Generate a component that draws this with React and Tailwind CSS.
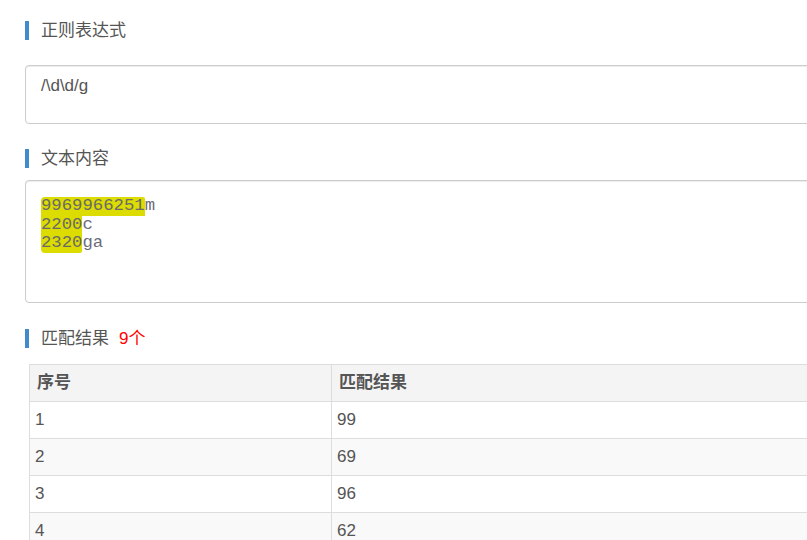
const matches = ["99", "69", "96", "62", "51", "22", "00", "23", "20"];

const lines = [
  { hit: "9969966251", rest: "m", first: true },
  { hit: "2200", rest: "c" },
  { hit: "2320", rest: "ga", last: true },
];

const SectionTitle = ({ children, className = "" }) => (
  <div
    className={`flex h-[19px] items-center border-l-4 border-[#428bca] pl-3 text-[17px] text-[#555] ${className}`}
  >
    {children}
  </div>
);

const App = () => {
  return (
    <div
      className="h-[540px] w-[807px] overflow-hidden bg-white text-[#555]"
      style={{ fontFamily: '"Liberation Sans", "Noto Sans CJK SC", sans-serif' }}
    >
      <div className="w-[1100px] pl-[25px] pt-[21px]">
        <SectionTitle>正则表达式</SectionTitle>

        <div className="mt-[25px] h-[59px] w-[1000px] rounded-[4px] border border-[#ccc] px-[15px] pt-[8px] text-[17px] leading-[24px] shadow-[inset_0_1px_1px_rgba(0,0,0,0.075)]">
          /\d\d/g
        </div>

        <SectionTitle className="mt-[25px]">文本内容</SectionTitle>

        <div
          className="mt-[12px] h-[123px] w-[1000px] rounded-[4px] border border-[#ccc] px-[15px] pt-[16px] text-[17.3px] font-light text-[#6a6a6a] shadow-[inset_0_1px_1px_rgba(0,0,0,0.075)]"
          style={{ fontFamily: '"Liberation Mono", monospace' }}
        >
          {lines.map((l) => (
            <div key={l.hit} className="flex h-[18.5px] leading-[18.5px]">
              <span
                className={`bg-[#dcdc00] ${l.first ? "rounded-tl-[4px] rounded-tr-[2px]" : ""} ${
                  l.last ? "rounded-bl-[4px] rounded-br-[2px]" : ""
                }`}
              >
                {l.hit}
              </span>
              <span className="text-[#6b6b7a]">{l.rest}</span>
            </div>
          ))}
        </div>

        <SectionTitle className="mt-[26px]">
          匹配结果<span className="ml-[10px] text-[#f00]">9个</span>
        </SectionTitle>

        <table className="ml-[4px] mt-[16px] w-[1000px] border-collapse text-[17px]">
          <thead>
            <tr className="h-[37px] bg-[#f4f4f4]">
              <th className="w-[302px] border border-[#ddd] px-[7px] text-left font-bold">序号</th>
              <th className="border border-[#ddd] px-[7px] text-left font-bold">匹配结果</th>
            </tr>
          </thead>
          <tbody>
            {matches.map((m, i) => (
              <tr key={i} className={`h-[37px] ${i % 2 ? "bg-[#f9f9f9]" : "bg-white"}`}>
                <td className="border border-[#ddd] px-[5px]">{i + 1}</td>
                <td className="border border-[#ddd] px-[5px]">{m}</td>
              </tr>
            ))}
          </tbody>
        </table>
      </div>
    </div>
  );
};

export default App;
